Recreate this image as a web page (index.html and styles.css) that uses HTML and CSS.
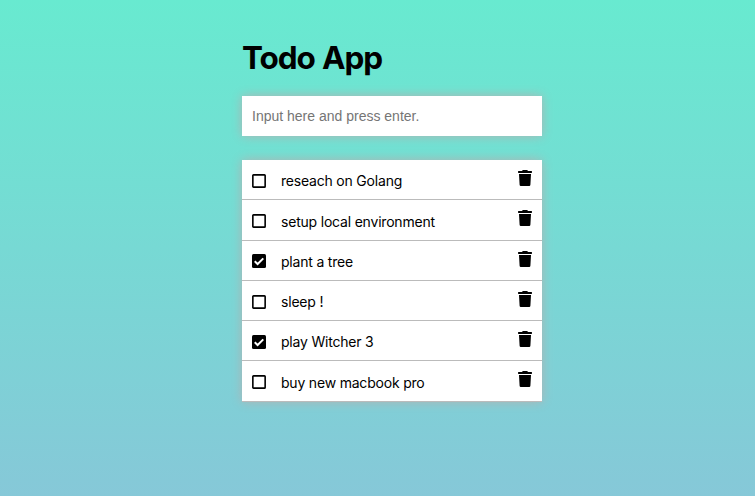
FILE: index.html
```
<!DOCTYPE html>
<html lang="en">
<head>
<meta charset="utf-8">
<title>Todo App</title>
<link rel="stylesheet" href="styles.css">
</head>
<body>
<svg class="sprite" aria-hidden="true">
  <symbol id="box" viewBox="0 0 14 14"><rect x=".85" y=".85" width="12.3" height="12.3" rx=".7" fill="none" stroke="#000" stroke-width="1.6"/></symbol>
  <symbol id="checked" viewBox="0 0 14 14"><rect width="14" height="14" rx="1.5"/><path d="M2.7 7.2 5.6 10 11.3 4.4" fill="none" stroke="#fff" stroke-width="2"/></symbol>
  <symbol id="trash" viewBox="0 0 14 16"><path d="M.5 1H4L4.8 0H9.2L10 1H13.5L14 1.5V2.5L13.5 3H.5L0 2.5V1.5ZM1 4H13L12.4 14.8Q12.3 16 11.2 16H2.8Q1.7 16 1.6 14.8Z"/></symbol>
</svg>
<main class="app">
  <h1 class="title">Todo App</h1>
  <input class="entry" type="text" placeholder="Input here and press enter.">
  <ul class="list">
    <li class="item"><svg class="check"><use href="#box"/></svg><span class="label">reseach on Golang</span><svg class="trash"><use href="#trash"/></svg></li>
    <li class="item"><svg class="check"><use href="#box"/></svg><span class="label">setup local environment</span><svg class="trash"><use href="#trash"/></svg></li>
    <li class="item"><svg class="check"><use href="#checked"/></svg><span class="label">plant a tree</span><svg class="trash"><use href="#trash"/></svg></li>
    <li class="item"><svg class="check"><use href="#box"/></svg><span class="label">sleep !</span><svg class="trash"><use href="#trash"/></svg></li>
    <li class="item"><svg class="check"><use href="#checked"/></svg><span class="label">play Witcher 3</span><svg class="trash"><use href="#trash"/></svg></li>
    <li class="item"><svg class="check"><use href="#box"/></svg><span class="label">buy new macbook pro</span><svg class="trash"><use href="#trash"/></svg></li>
  </ul>
</main>
</body>
</html>
```
FILE: styles.css
```
* { box-sizing: border-box; }
html { height: 100%; }
body {
  margin: 0;
  min-height: 100%;
  background: linear-gradient(#68ead0, #86c8d8);
  font-family: Inter, sans-serif;
  color: #000;
}
.sprite { display: none; }
.app {
  width: 300px;
  margin-left: 242px;
  padding-top: 38px;
}
.title {
  margin: 0 0 18px;
  font-size: 31.5px;
  line-height: 40px;
  font-weight: 700;
  letter-spacing: -1.1px;
  word-spacing: 1px;
}
.entry {
  display: block;
  width: 300px;
  height: 40px;
  padding: 0 10px;
  border: 0;
  border-radius: 0;
  background: #fff;
  box-shadow: 0 0 10px #b2b2b2;
  font: 14px "Liberation Sans", sans-serif;
}
.entry::placeholder { color: #757575; }
.list {
  list-style: none;
  margin: 24px 0 0;
  padding: 0;
  background: #fff;
  box-shadow: 0 0 10px #b2b2b2;
}
.item {
  display: flex;
  align-items: flex-start;
  height: 40px;
  padding: 10px 10px 0;
  border-bottom: 1px solid #bbb;
}
.item:nth-child(2),
.item:nth-child(6) { height: 41px; }
.item:nth-child(2) .label,
.item:nth-child(6) .label { padding-top: 1px; }
.check {
  width: 14px;
  height: 14px;
  margin: 4px 15px 0 0;
}
.item:nth-child(3) .check { margin-top: 3px; }
.label {
  flex: 1;
  font-size: 14px;
  line-height: 22px;
  letter-spacing: -0.2px;
}
.trash {
  width: 14px;
  height: 16px;
}
```
